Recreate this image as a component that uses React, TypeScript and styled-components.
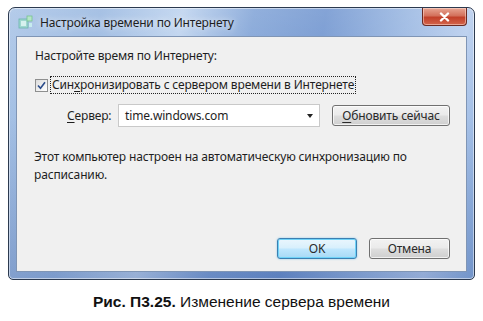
import styled, { createGlobalStyle } from "styled-components";

const GlobalStyle = createGlobalStyle`
  html, body {
    margin: 0;
    padding: 0;
    background: #ffffff;
  }
  body {
    font-family: "Noto Sans", "Open Sans", sans-serif;
  }
`;

const Page = styled.div`
  width: 483px;
  height: 321px;
  padding: 7px 8px 0 8px;
  box-sizing: border-box;
  display: flex;
  flex-direction: column;
  align-items: stretch;
  overflow: hidden;
`;

const Window = styled.div`
  height: 273px;
  box-sizing: border-box;
  border: 1px solid #2c3a4f;
  border-radius: 7px 7px 5px 5px;
  padding: 0 7px 7px 7px;
  display: flex;
  flex-direction: column;
  background:
    linear-gradient(to bottom, rgba(255, 255, 255, 0.15) 0%, rgba(40, 70, 130, 0) 40%, rgba(40, 70, 140, 0.25) 100%),
    linear-gradient(
      100deg,
      #a8c3e6 0%,
      #98b7e0 18%,
      #bcd2ee 34%,
      #7fa2d6 48%,
      #6f94cf 62%,
      #98b6e1 78%,
      #b6cced 90%,
      #8aaede 100%
    );
  box-shadow: inset 0 0 0 1px rgba(255, 255, 255, 0.5);
`;

const TitleBar = styled.div`
  height: 28px;
  display: flex;
  align-items: center;
  gap: 6px;
  padding-left: 2px;
`;

const TitleText = styled.span`
  flex: 1;
  font-size: 12px;
  color: #1e1e1e;
  text-shadow: 0 0 6px rgba(255, 255, 255, 0.9);
  letter-spacing: -0.15px;
`;

const CloseButton = styled.div`
  align-self: flex-start;
  width: 45px;
  height: 18px;
  box-sizing: border-box;
  border: 1px solid #6b2a22;
  border-top: none;
  border-radius: 0 0 4px 4px;
  background: linear-gradient(to bottom, #e8a593 0%, #d3715c 45%, #c2402a 55%, #d3644a 100%);
  box-shadow: inset 0 0 0 1px rgba(255, 230, 220, 0.5);
  display: flex;
  align-items: center;
  justify-content: center;
`;

const Client = styled.div`
  flex: 1;
  box-sizing: border-box;
  border: 1px solid #7f95b5;
  background: #f0f0f0;
  padding: 11px 16px 12px 17px;
  display: flex;
  flex-direction: column;
  font-size: 12px;
  letter-spacing: -0.15px;
  color: #1e1e1e;
`;

const Heading = styled.div`
  line-height: 16px;
  margin-left: 1px;
`;

const CheckRow = styled.div`
  margin-top: 12px;
  display: flex;
  align-items: center;
  gap: 2px;
  margin-left: 1px;
`;

const Box = styled.span`
  width: 13px;
  height: 13px;
  box-sizing: border-box;
  border: 1px solid #8e8f8f;
  background: linear-gradient(135deg, #dcdcdc, #ffffff);
  display: flex;
  align-items: center;
  justify-content: center;
`;

const FocusLabel = styled.span`
  border: 1px dotted #222;
  padding: 0 1px;
  line-height: 16px;
`;

const Key = styled.span`
  text-decoration: underline;
  text-underline-offset: 2px;
`;

const ServerRow = styled.div`
  margin-top: 10px;
  display: flex;
  align-items: center;
  padding-left: 33px;
`;

const Label = styled.span`
  width: 51px;
`;

const Combo = styled.div`
  width: 202px;
  height: 23px;
  box-sizing: border-box;
  border: 1px solid #c9c9c9;
  background: #ffffff;
  display: flex;
  align-items: center;
  padding: 0 6px 0 6px;
`;

const ComboText = styled.span`
  flex: 1;
`;

const Arrow = styled.span`
  width: 0;
  height: 0;
  border-left: 3.5px solid transparent;
  border-right: 3.5px solid transparent;
  border-top: 4px solid #222;
`;

const Button = styled.div<{ $primary?: boolean; $width: number }>`
  width: ${(p) => p.$width}px;
  height: 21px;
  box-sizing: border-box;
  border: 1px solid ${(p) => (p.$primary ? "#3c7fb1" : "#707070")};
  border-radius: 3px;
  background: ${(p) =>
    p.$primary
      ? "linear-gradient(to bottom, #eaf6fd 0%, #d9f0fc 45%, #bee6fd 55%, #a7d9f5 100%)"
      : "linear-gradient(to bottom, #f2f2f2 0%, #ebebeb 45%, #dddddd 55%, #cfcfcf 100%)"};
  box-shadow: ${(p) =>
    p.$primary
      ? "inset 0 0 0 1px #6fd3f8, 0 0 2px #7fc4ea"
      : "inset 0 0 0 1px rgba(255,255,255,0.7)"};
  display: flex;
  align-items: center;
  justify-content: center;
  color: #2a2a2a;
  font-size: 12px;
`;

const UpdateButton = styled(Button)`
  margin-left: 12px;
`;

const Info = styled.div`
  margin-top: 21px;
  line-height: 18px;
  width: 400px;
`;

const Footer = styled.div`
  margin-top: auto;
  display: flex;
  justify-content: flex-end;
  gap: 12px;
`;

const Caption = styled.div`
  margin-top: 13px;
  text-align: center;
  font-family: "Liberation Sans", Arial, sans-serif;
  font-size: 15.5px;
  color: #111;
`;

const Strong = styled.b`
  font-weight: 700;
`;

function TitleIcon() {
  return (
    <svg width="16" height="14" viewBox="0 0 16 14">
      <rect x="1" y="4" width="9" height="9" fill="#9fd8d0" stroke="#6bb5ad" strokeWidth="0.8" />
      <rect x="3" y="6" width="5" height="5" fill="#d6f2ee" />
      <rect x="9" y="1" width="5" height="5" fill="#b6e6c8" stroke="#78c28f" strokeWidth="0.8" />
      <rect x="11" y="8" width="3" height="4" fill="#c7ecef" />
    </svg>
  );
}

function CloseIcon() {
  return (
    <svg width="11" height="10" viewBox="0 0 11 10">
      <path d="M2 1.5 L9 8.5 M9 1.5 L2 8.5" stroke="#ffffff" strokeWidth="2.4" strokeLinecap="round" />
    </svg>
  );
}

function CheckMark() {
  return (
    <svg width="9" height="9" viewBox="0 0 9 9">
      <path d="M1 4.5 L3.5 7.3 L8 1.2" fill="none" stroke="#2b4c8a" strokeWidth="1.6" />
    </svg>
  );
}

export default function App() {
  return (
    <>
      <GlobalStyle />
      <Page>
        <Window>
          <TitleBar>
            <TitleIcon />
            <TitleText>Настройка времени по Интернету</TitleText>
            <CloseButton>
              <CloseIcon />
            </CloseButton>
          </TitleBar>
          <Client>
            <Heading>Настройте время по Интернету:</Heading>
            <CheckRow>
              <Box>
                <CheckMark />
              </Box>
              <FocusLabel>
                Син<Key>х</Key>ронизировать с сервером времени в Интернете
              </FocusLabel>
            </CheckRow>
            <ServerRow>
              <Label>
                <Key>С</Key>ервер:
              </Label>
              <Combo>
                <ComboText>time.windows.com</ComboText>
                <Arrow />
              </Combo>
              <UpdateButton $width={118}>
                <span>
                  <Key>О</Key>бновить сейчас
                </span>
              </UpdateButton>
            </ServerRow>
            <Info>
              Этот компьютер настроен на автоматическую синхронизацию по расписанию.
            </Info>
            <Footer>
              <Button $primary $width={80}>
                OK
              </Button>
              <Button $width={81}>Отмена</Button>
            </Footer>
          </Client>
        </Window>
        <Caption>
          <Strong>Рис. П3.25.</Strong> Изменение сервера времени
        </Caption>
      </Page>
    </>
  );
}
